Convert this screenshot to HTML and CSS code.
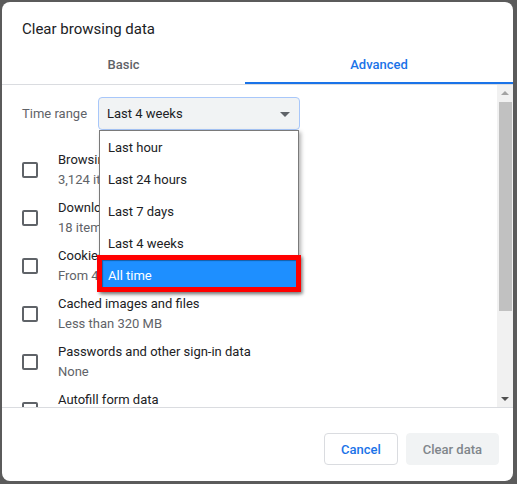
FILE: index.html
```html
<!DOCTYPE html>
<html lang="en">
<head>
<meta charset="utf-8">
<title>Clear browsing data</title>
<link rel="stylesheet" href="styles.css">
</head>
<body>
<div class="dialog">
  <div class="header">Clear browsing data</div>
  <div class="tabs">
    <div class="tab">Basic</div>
    <div class="tab active">Advanced</div>
  </div>
  <div class="body">
    <div class="content">
      <div class="time-row">
        <span class="label">Time range</span>
        <div class="select">
          <span class="value">Last 4 weeks</span>
          <span class="caret"></span>
          <ul class="dropdown">
            <li>Last hour</li>
            <li>Last 24 hours</li>
            <li>Last 7 days</li>
            <li>Last 4 weeks</li>
            <li class="selected">All time</li>
          </ul>
          <div class="frame"></div>
        </div>
      </div>
      <div class="option"><span class="check"></span><div class="texts"><div class="name">Browsing history</div><div class="sub">3,124 items</div></div></div>
      <div class="option"><span class="check"></span><div class="texts"><div class="name">Download history</div><div class="sub">18 items</div></div></div>
      <div class="option"><span class="check"></span><div class="texts"><div class="name">Cookies and other site data</div><div class="sub">From 43 sites</div></div></div>
      <div class="option"><span class="check"></span><div class="texts"><div class="name">Cached images and files</div><div class="sub">Less than 320 MB</div></div></div>
      <div class="option"><span class="check"></span><div class="texts"><div class="name">Passwords and other sign-in data</div><div class="sub">None</div></div></div>
      <div class="option"><span class="check"></span><div class="texts"><div class="name">Autofill form data</div><div class="sub">None</div></div></div>
    </div>
    <div class="scrollbar">
      <div class="arrow-box"><span class="arrow up"></span></div>
      <div class="thumb"></div>
      <div class="spacer"></div>
      <div class="arrow-box"><span class="arrow down"></span></div>
    </div>
  </div>
  <div class="footer">
    <button class="btn cancel">Cancel</button>
    <button class="btn clear">Clear data</button>
  </div>
</div>
</body>
</html>
```

FILE: styles.css
```css
html, body {
  margin: 0;
  padding: 0;
}
body {
  background: #5b5b5b;
  padding: 2px 0 0 2px;
  height: 484px;
  box-sizing: border-box;
  font-family: Roboto, "Liberation Sans", sans-serif;
  overflow: hidden;
}
.dialog {
  width: 511px;
  height: 479px;
  background: #fff;
  border-radius: 8px;
  display: flex;
  flex-direction: column;
  overflow: hidden;
}
.header {
  padding: 17px 20px 7px;
  font-size: 15px;
  line-height: 20px;
  color: #202124;
}
.tabs {
  display: grid;
  grid-template-columns: 243px 1fr;
  border-bottom: 1px solid #dadce0;
}
.tab {
  height: 35px;
  padding-top: 1px;
  line-height: 36px;
  text-align: center;
  font-size: 13px;
  font-weight: 500;
  color: #5f6368;
  border-bottom: 2px solid transparent;
}
.tab.active {
  color: #1a73e8;
  border-bottom-color: #1a73e8;
}
.body {
  height: 322px;
  display: flex;
}
.content {
  flex: 1;
  overflow: hidden;
  padding-top: 12px;
}
.time-row {
  display: grid;
  grid-template-columns: 76px 202px;
  align-items: center;
  padding-left: 20px;
  margin-bottom: 16px;
  font-size: 13px;
}
.label {
  color: #5f6368;
}
.select {
  position: relative;
  height: 33px;
  box-sizing: border-box;
  border: 1px solid #a8c7fa;
  border-radius: 4px;
  background: #f1f3f4;
  display: flex;
  align-items: center;
  padding-left: 8px;
  color: #202124;
}
.caret {
  position: absolute;
  right: 9px;
  top: 14px;
  border-left: 5px solid transparent;
  border-right: 5px solid transparent;
  border-top: 5px solid #5f6368;
}
.dropdown {
  position: absolute;
  left: 0;
  top: 32px;
  width: 200px;
  box-sizing: border-box;
  margin: 0;
  padding: 0;
  list-style: none;
  background: #fff;
  border: 1px solid #7a7a7a;
  box-shadow: 2px 2px 4px rgba(0, 0, 0, 0.3);
  z-index: 2;
}
.dropdown li {
  height: 30px;
  padding-top: 2px;
  line-height: 30px;
  padding-left: 8px;
  color: #202124;
}
.dropdown li.selected {
  background: #1e8fff;
  color: #fff;
}
.frame {
  position: absolute;
  left: -2px;
  top: 157px;
  width: 204px;
  height: 37px;
  box-sizing: border-box;
  border: 5px solid #ff0000;
  box-shadow: 2px 2px 3px rgba(0, 0, 0, 0.35), inset 1px 1px 1px rgba(0, 0, 0, 0.35);
  z-index: 3;
}
.option {
  display: flex;
  align-items: center;
  gap: 20px;
  height: 48px;
  padding-left: 20px;
  font-size: 13px;
  line-height: 20px;
}
.check {
  width: 16px;
  height: 16px;
  box-sizing: border-box;
  border: 2px solid #5f6368;
  border-radius: 2px;
  flex: none;
}
.name {
  color: #202124;
}
.sub {
  color: #5f6368;
}
.scrollbar {
  width: 16px;
  background: #f1f1f1;
  display: flex;
  flex-direction: column;
  align-items: center;
}
.arrow-box {
  height: 16px;
  width: 16px;
  display: flex;
  align-items: center;
  justify-content: center;
}
.arrow {
  width: 0;
  height: 0;
  border-left: 4px solid transparent;
  border-right: 4px solid transparent;
}
.arrow.up {
  border-bottom: 4px solid #a3a3a3;
}
.arrow.down {
  border-top: 4px solid #505050;
}
.thumb {
  width: 13px;
  margin-left: 1px;
  margin-top: 1px;
  height: 209px;
  background: #c1c1c1;
}
.spacer {
  flex: 1;
}
.footer {
  border-top: 1px solid #dadce0;
  padding: 25px 14px 16px;
  display: flex;
  justify-content: flex-end;
  gap: 8px;
}
.btn {
  height: 32px;
  padding: 0 16px;
  font-family: Roboto, "Liberation Sans", sans-serif;
  font-size: 13px;
  font-weight: 500;
  border-radius: 4px;
}
.btn.cancel {
  background: #fff;
  border: 1px solid #dadce0;
  color: #1a73e8;
}
.btn.clear {
  background: #f1f3f4;
  border: 1px solid #f1f3f4;
  color: #80868b;
}
```
